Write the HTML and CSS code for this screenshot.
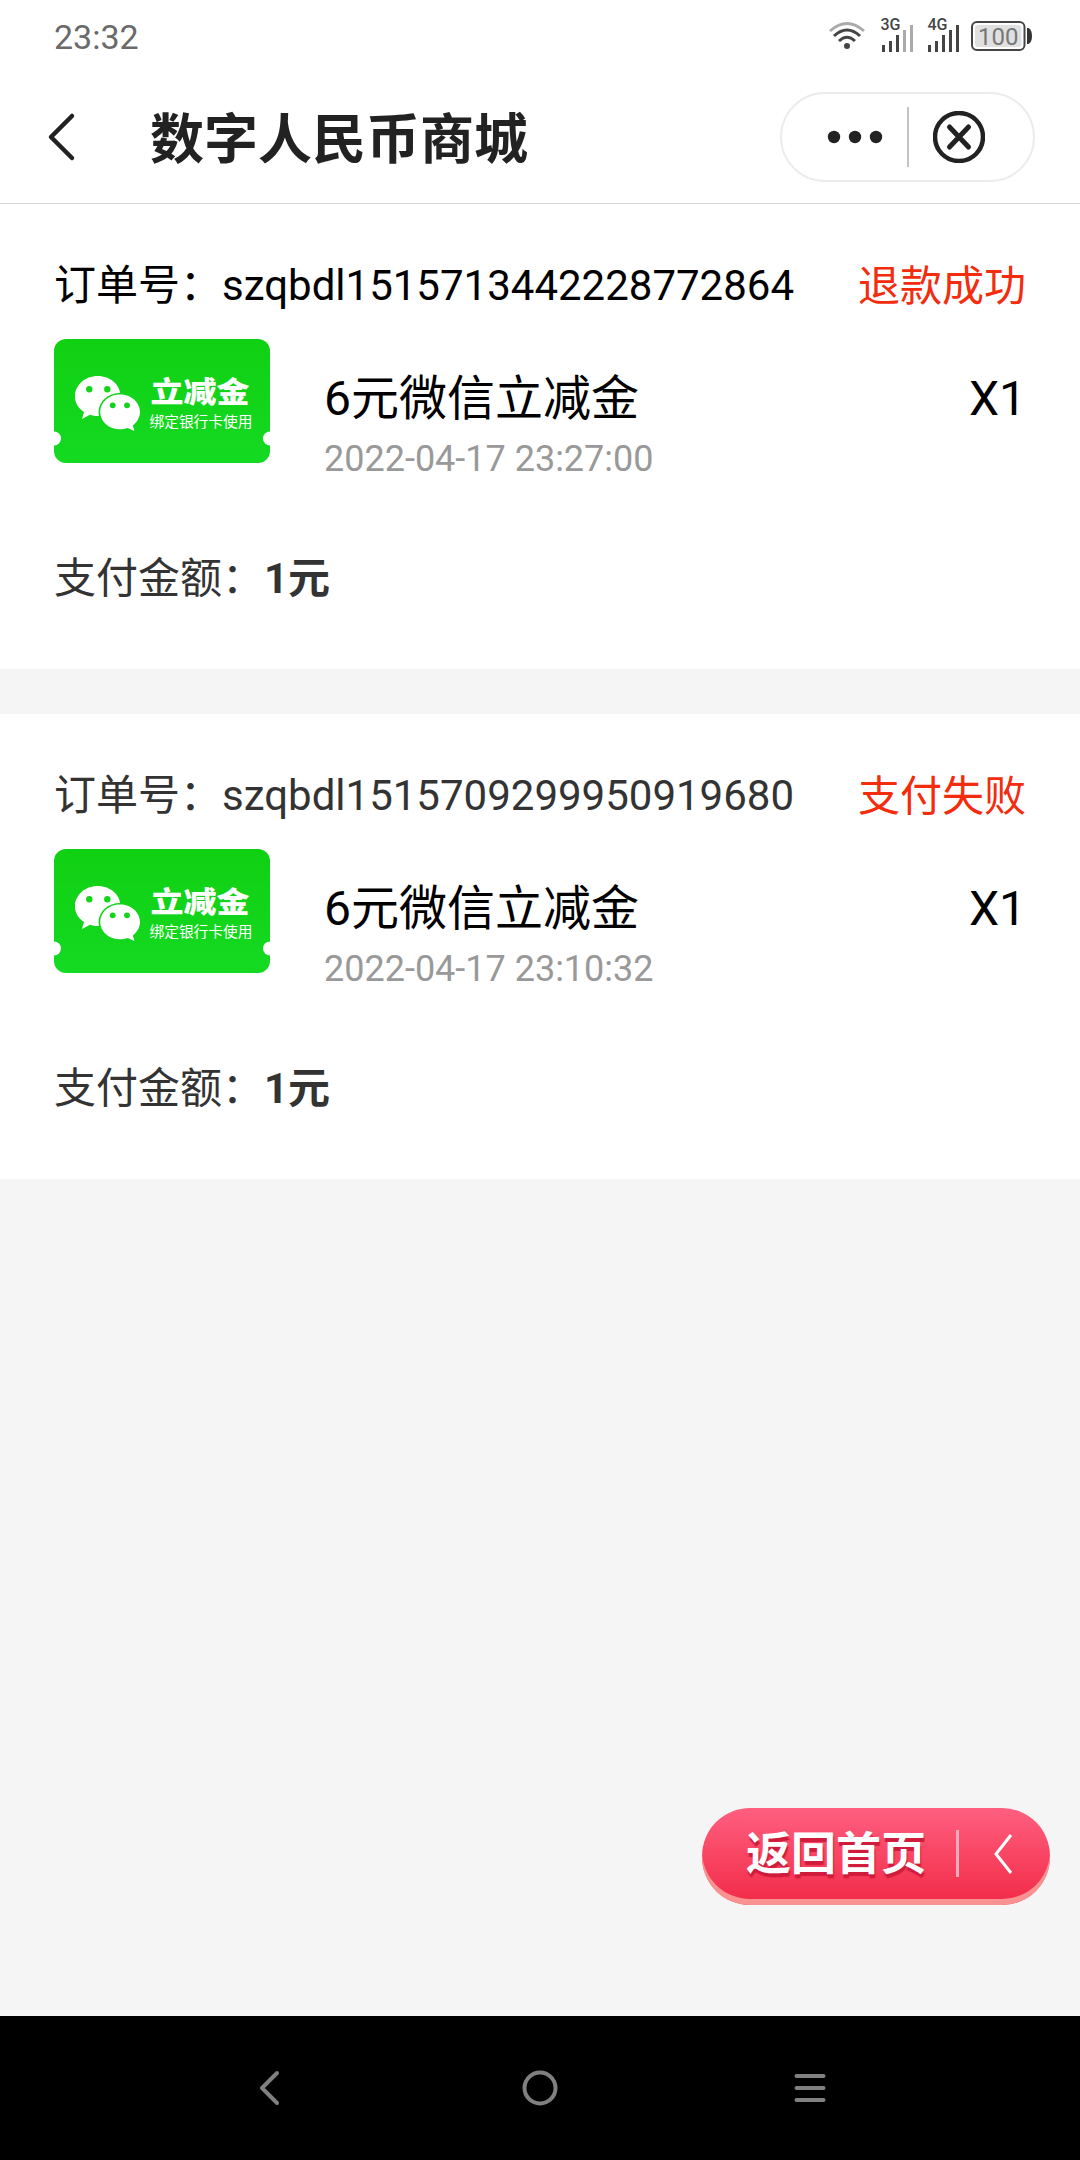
FILE: index.html
```html
<!DOCTYPE html>
<html lang="zh-CN">
<head>
    <meta charset="UTF-8">
    <meta name="viewport" content="width=device-width, initial-scale=1.0">
    <title>数字人民币商城</title>
    <link rel="stylesheet" href="styles.css">
</head>
<body>
    <svg class="defs" width="0" height="0">
        <defs>
            <linearGradient id="green" x1="0" y1="0" x2="0" y2="1">
                <stop offset="0" stop-color="#10d012"/>
                <stop offset="1" stop-color="#14da22"/>
            </linearGradient>
            <symbol id="coupon" viewBox="0 0 216 124">
                <rect width="216" height="124" rx="12" fill="url(#green)"/>
                <circle cx="0" cy="99.5" r="7" fill="#fff"/>
                <circle cx="216" cy="99.5" r="7" fill="#fff"/>
                <!-- wechat bubbles -->
                <path fill="#fff" d="M43.7 37C31 37 21 46 21 57.5C21 64 24.5 69.5 30 73L28 80L36 75.8C38.5 76.6 41 77 44 77C56.5 77 66.5 68 66.5 57C66.5 46 56.5 37 43.7 37Z"/>
                <ellipse cx="66" cy="73" rx="21.5" ry="19" fill="#12d51a"/>
                <path fill="#fff" d="M66 55.5C55 55.5 46.2 63.3 46.2 73C46.2 82.7 55 90.3 66 90.3C68.8 90.3 71.4 89.9 73.8 89L80.5 92L78.8 86.5C83 83.3 86 78.5 86 73C86 63.3 77 55.5 66 55.5Z"/>
                <g fill="#12d51a">
                    <circle cx="35.3" cy="50.3" r="3.2"/>
                    <circle cx="53.3" cy="50.3" r="3.2"/>
                    <circle cx="58.7" cy="66.3" r="2.9"/>
                    <circle cx="73" cy="66.3" r="2.9"/>
                </g>
                <text class="coupon-title" transform="translate(96.5 63.5) scale(1 .88)">立减金</text>
                <text class="coupon-sub" x="95.5" y="87.5">绑定银行卡使用</text>
            </symbol>
        </defs>
    </svg>

    <div class="status-bar">
        <span class="clock">23:32</span>
        <svg class="status-icons" width="204" height="44" viewBox="0 -2 204 44">
            <g fill="none" stroke="#444" stroke-width="3">
                <path stroke="#aaa" d="M2 15Q19 0 36 15"/>
                <path d="M6 20Q19 8 32 20"/>
                <path d="M11 25Q19 17.5 27 25"/>
            </g>
            <circle cx="19" cy="30" r="3" fill="#444"/>
            <text class="net" x="52.5" y="14">3G</text>
            <g fill="#444">
                <path d="M54 29h3v7h-3zM61 25h3v11h-3zM68 19h3v17h-3z"/>
                <path fill="#aaa" d="M75 14h3v22h-3zM82 9h3v27h-3z"/>
                <path d="M100 29h3v7h-3zM107 25h3v11h-3zM114 19h3v17h-3zM121 14h3v22h-3zM128 9h3v27h-3z"/>
            </g>
            <text class="net" x="99.5" y="14">4G</text>
            <rect x="144" y="6" width="52.5" height="28" rx="5" fill="#fff" stroke="#444" stroke-width="2"/>
            <rect x="147" y="9" width="46.5" height="22" rx="3" fill="#e0e0e0"/>
            <path fill="#333" d="M199 12h1.5q3.5 2 3.5 8t-3.5 8h-1.5z"/>
            <text class="battery" x="150" y="29">100</text>
        </svg>
    </div>

    <div class="header">
        <svg class="back" width="30" height="50" viewBox="0 0 30 50">
            <path d="M26 4L5 25L26 46"/>
        </svg>
        <h1>数字人民币商城</h1>
        <div class="capsule">
            <svg width="56" height="14" viewBox="0 0 56 14">
                <circle cx="7" cy="7" r="6.2"/>
                <circle cx="28" cy="7" r="6.2"/>
                <circle cx="49" cy="7" r="6.2"/>
            </svg>
            <span class="capsule-line"></span>
            <svg class="close" width="52" height="52" viewBox="0 0 52 52">
                <circle cx="26" cy="26" r="24"/>
                <path d="M16.5 16L35.5 36M35.5 16L16.5 36"/>
            </svg>
        </div>
    </div>

    <div class="orders">
        <div class="order visited">
            <div class="order-top">
                <span>订单号：szqbdl1515713442228772864</span>
                <span class="state">退款成功</span>
            </div>
            <div class="goods">
                <svg class="goods-img" width="216" height="124"><use href="#coupon"/></svg>
                <div class="goods-info">
                    <div class="goods-name">6元微信立减金</div>
                    <div class="goods-time">2022-04-17 23:27:00</div>
                </div>
                <div class="goods-count">X1</div>
            </div>
            <div class="pay">支付金额：<b>1元</b></div>
        </div>
        <div class="order">
            <div class="order-top">
                <span>订单号：szqbdl1515709299950919680</span>
                <span class="state">支付失败</span>
            </div>
            <div class="goods">
                <svg class="goods-img" width="216" height="124"><use href="#coupon"/></svg>
                <div class="goods-info">
                    <div class="goods-name">6元微信立减金</div>
                    <div class="goods-time">2022-04-17 23:10:32</div>
                </div>
                <div class="goods-count">X1</div>
            </div>
            <div class="pay">支付金额：<b>1元</b></div>
        </div>
    </div>

    <div class="home-btn">
        <span>返回首页</span>
        <i class="home-line"></i>
        <svg width="20" height="42" viewBox="0 0 20 42">
            <path d="M18 2L3 21L18 40"/>
        </svg>
    </div>

    <div class="nav-bar">
        <svg width="40" height="40" viewBox="0 0 40 40"><path d="M27 5L12 20L27 35"/></svg>
        <svg width="40" height="40" viewBox="0 0 40 40"><circle cx="20" cy="20" r="15.5"/></svg>
        <svg width="40" height="40" viewBox="0 0 40 40"><path d="M6.5 8H33.5M6.5 20H33.5M6.5 32H33.5"/></svg>
    </div>
</body>
</html>
```
FILE: styles.css
```css
* {
    box-sizing: border-box;
}
body {
    margin: 0;
    width: 1080px;
    height: 2160px;
    display: flex;
    flex-direction: column;
    background-color: #f5f5f5;
    font-family: Roboto, "Noto Sans CJK SC", sans-serif;
    color: #333;
    overflow: hidden;
}
svg {
    display: block;
    flex: none;
}
.defs {
    position: absolute;
}
.status-bar {
    height: 72px;
    padding: 0 48px 0 54px;
    display: flex;
    align-items: center;
    justify-content: space-between;
    background-color: #fff;
}
.clock {
    font-size: 34px;
    color: #6a6a6a;
    padding-top: 2px;
}
.net {
    font-size: 16px;
    font-weight: 500;
    fill: #444;
}
.battery {
    font-size: 24px;
    fill: #777;
}
.header {
    height: 132px;
    padding: 0 45px 2px 46px;
    display: flex;
    align-items: center;
    background-color: #fff;
    border-bottom: 1px solid #d8d8d8;
}
.back {
    fill: none;
    stroke: #222;
    stroke-width: 4.5;
    stroke-linecap: round;
    stroke-linejoin: round;
}
h1 {
    flex: 1;
    margin: 0;
    padding: 9px 0 0 74px;
    font-size: 54px;
    font-weight: bold;
    line-height: 80px;
    color: #222;
}
.capsule {
    width: 255px;
    height: 90px;
    padding: 0 48px 0 45px;
    display: flex;
    align-items: center;
    justify-content: space-between;
    border: 2px solid #ececec;
    border-radius: 45px;
    fill: #222;
}
.capsule-line {
    width: 2px;
    height: 60px;
    background-color: #c4c4c4;
}
.close {
    fill: none;
    stroke: #222;
    stroke-width: 4.5;
    stroke-linecap: round;
}
.close path {
    stroke-width: 5;
}
.orders {
    display: flex;
    flex-direction: column;
    gap: 45px;
}
.order {
    height: 465px;
    padding: 51px 54px 0;
    background-color: #fff;
    font-size: 42px;
    line-height: 62px;
}
.order-top {
    display: flex;
    justify-content: space-between;
}
.visited .order-top {
    color: #000;
}
.order .state {
    color: #f22c0c;
    padding-top: 1px;
    line-height: 61px;
}
.goods {
    display: flex;
    margin-top: 22px;
    height: 150px;
}
.goods-info {
    flex: 1;
    padding: 25px 0 0 54px;
}
.goods-name, .goods-count {
    font-size: 48px;
    line-height: 70px;
    color: #000;
}
.goods-count {
    padding-top: 25px;
}
.goods-time {
    font-size: 36px;
    line-height: 50px;
    color: #999;
}
.pay {
    margin-top: 59px;
}
.coupon-title {
    font-size: 33px;
    font-weight: 900;
    fill: #fff;
}
.coupon-sub {
    font-size: 14.7px;
    fill: #fff;
}
.home-btn {
    width: 348px;
    height: 97px;
    margin: auto 30px 111px auto;
    padding: 0 38px 6px 44px;
    display: flex;
    align-items: center;
    border-radius: 48px;
    background: linear-gradient(#ff5f80, #f12a46);
    box-shadow: inset 0 -6px 0 #fb9292;
    color: #fff;
    font-size: 45px;
    font-weight: bold;
    white-space: nowrap;
    text-shadow: 1px 4px 1px #d01c3c;
}
.home-btn span {
    padding-bottom: 6px;
}
.home-line {
    flex: none;
    width: 3px;
    height: 47px;
    margin: 0 34px 0 30px;
    background-color: #ffa9b8;
}
.home-btn svg {
    fill: none;
    stroke: #fff;
    stroke-width: 3;
}
.nav-bar {
    flex: none;
    height: 144px;
    padding: 0 250px;
    display: flex;
    align-items: center;
    justify-content: space-between;
    background-color: #000;
    fill: none;
    stroke: #808080;
    stroke-width: 4;
    stroke-linecap: round;
    stroke-linejoin: round;
}
```
